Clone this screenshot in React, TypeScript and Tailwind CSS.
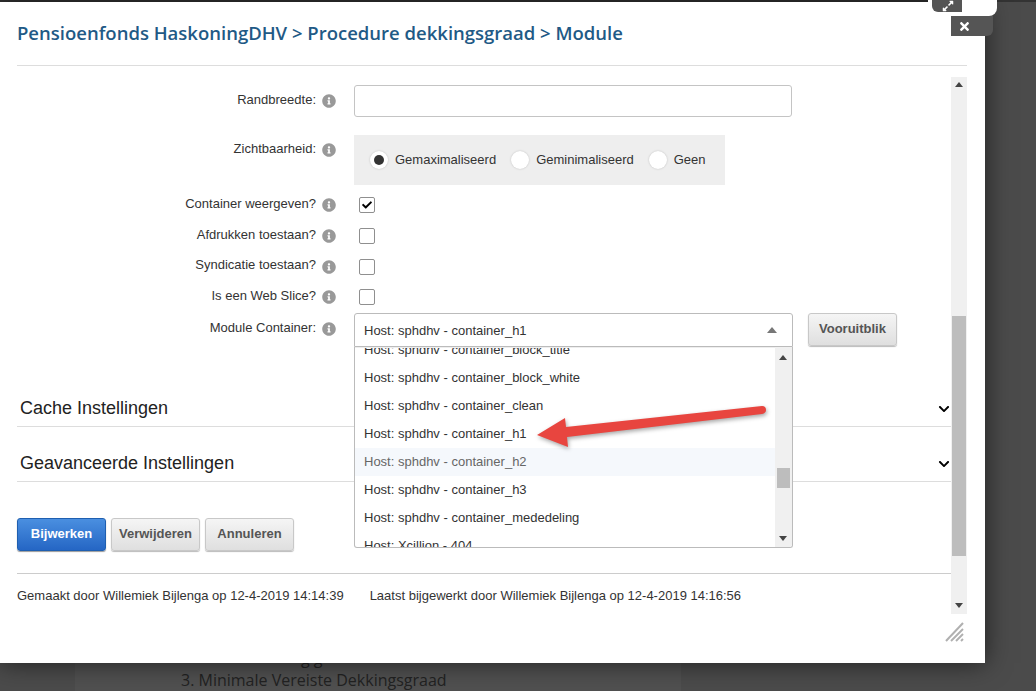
import { FaCheck, FaChevronDown, FaExpandAlt, FaInfoCircle, FaTimes } from "react-icons/fa";

const options = [
  "Host: sphdhv - container_block_title",
  "Host: sphdhv - container_block_white",
  "Host: sphdhv - container_clean",
  "Host: sphdhv - container_h1",
  "Host: sphdhv - container_h2",
  "Host: sphdhv - container_h3",
  "Host: sphdhv - container_mededeling",
  "Host: Xcillion - 404",
];

const Label = ({ text }: { text: string }) => (
  <div className="flex w-[319px] shrink-0 items-center justify-end gap-[6px]">
    <span className="pb-[3px]">{text}</span>
    <FaInfoCircle className="h-[14px] w-[14px] text-[#999]" />
  </div>
);

const Check = ({ label, checked }: { label: string; checked?: boolean }) => (
  <div className="flex h-[30.7px] items-center">
    <Label text={label} />
    <div className="ml-[23px] flex h-[16px] w-[16px] items-center justify-center rounded-[2px] border border-[#8f8f8f] bg-white">
      {checked && <FaCheck className="h-[10px] w-[10px] text-black" />}
    </div>
  </div>
);

const Radio = ({ label, on }: { label: string; on?: boolean }) => (
  <div className="flex items-center gap-[7px]">
    <div className="flex h-[18px] w-[18px] items-center justify-center rounded-full bg-white shadow-[0_0_2px_#bbb]">
      {on && <div className="h-[10px] w-[10px] rounded-full bg-[#333]" />}
    </div>
    <span>{label}</span>
  </div>
);

const Section = ({ title }: { title: string }) => (
  <div className="flex h-[55px] items-center justify-between border-b border-[#ddd] pt-[20px] pr-[1px] pl-[3px]">
    <span className="text-[18px] text-[#222]">{title}</span>
    <FaChevronDown className="h-[12px] w-[12px] text-black" />
  </div>
);

const GreyButton = ({ children, w }: { children: string; w: string }) => (
  <button
    className={`h-[33px] rounded-[3px] border border-[#c8c8c8] bg-gradient-to-b from-[#f5f5f5] to-[#dfdfdf] pb-[2px] text-[13px] font-bold text-[#555] shadow-[0_1px_1px_#bbb] ${w}`}
  >
    {children}
  </button>
);

export default function App() {
  return (
    <div className="relative h-[691px] w-[1036px] overflow-hidden bg-[#4b4b4b] font-['Liberation_Sans',sans-serif] text-[13px] text-[#333]">
      <div className="h-[2px] bg-[#333]" />
      <div className="relative z-10 h-[661px] w-[985px] bg-white pr-[18px] pl-[17px] shadow-[0_0_24px_rgba(0,0,0,0.6)]">
        <h1 className="flex h-[64px] items-center border-b border-[#ddd] pb-[2px] font-['Open_Sans',sans-serif] text-[18.5px] font-semibold text-[#1f5a86]">
          Pensioenfonds HaskoningDHV &gt; Procedure dekkingsgraad &gt; Module
        </h1>

        <div className="mt-[11px] flex h-[537px]">
          <div className="w-[934px] shrink-0 pt-[8px]">
            <div className="flex items-start">
              <div className="pt-[5px]">
                <Label text="Randbreedte:" />
              </div>
              <input className="ml-[18px] h-[32px] w-[438px] rounded-[3px] border border-[#c4c4c4]" />
            </div>

            <div className="mt-[18px] flex items-start">
              <div className="pt-[4px]">
                <Label text="Zichtbaarheid:" />
              </div>
              <div className="ml-[18px] flex h-[50px] w-[371px] items-center gap-[15px] bg-[#eee] pl-[16px]">
                <Radio label="Gemaximaliseerd" on />
                <Radio label="Geminimaliseerd" />
                <Radio label="Geen" />
              </div>
            </div>

            <div className="mt-[5px]">
              <Check label="Container weergeven?" checked />
              <Check label="Afdrukken toestaan?" />
              <Check label="Syndicatie toestaan?" />
              <Check label="Is een Web Slice?" />
            </div>

            <div className="relative flex items-start">
              <div className="pt-[5px]">
                <Label text="Module Container:" />
              </div>
              <div className="ml-[18px] flex h-[34px] w-[439px] items-center justify-between rounded-t-[3px] border border-[#bbb] bg-white pt-[1px] pr-[15px] pl-[9px]">
                <span>Host: sphdhv - container_h1</span>
                <div className="h-0 w-0 border-x-[5px] border-b-[6px] border-x-transparent border-b-[#777]" />
              </div>
              <button className="ml-[15px] h-[33px] w-[89px] rounded-[3px] border border-[#c8c8c8] bg-gradient-to-b from-[#f5f5f5] to-[#dfdfdf] pb-[2px] text-[13px] font-bold text-[#555] shadow-[0_1px_1px_#bbb]">
                Vooruitblik
              </button>

              {/* open dropdown sits over the sections below */}
              <div className="absolute top-[34px] left-[337px] z-20 flex h-[201px] w-[439px] overflow-hidden rounded-b-[3px] border border-t-0 border-[#bbb] bg-white">
                <div className="flex-1 overflow-hidden border-t border-[#eee]">
                  <div className="-mt-[12px]">
                    {options.map((o) => (
                      <div
                        key={o}
                        className={`flex h-[28px] items-center pl-[9px] ${
                          o.endsWith("h2") ? "bg-[#f5f8fc] text-[#666]" : ""
                        }`}
                      >
                        {o}
                      </div>
                    ))}
                  </div>
                </div>
                <div className="relative w-[17px] bg-[#f0f0f0]">
                  <div className="absolute top-[8px] left-[4px] h-0 w-0 border-x-[4px] border-b-[5px] border-x-transparent border-b-[#444]" />
                  <div className="absolute top-[121px] left-[2px] h-[20px] w-[13px] bg-[#bdbdbd]" />
                  <div className="absolute bottom-[6px] left-[4px] h-0 w-0 border-x-[4px] border-t-[5px] border-x-transparent border-t-[#444]" />
                </div>
              </div>
            </div>

            <div className="mt-[25px]">
              <Section title="Cache Instellingen" />
              <Section title="Geavanceerde Instellingen" />
            </div>

            <div className="mt-[36px] flex gap-[5px]">
              <button className="h-[33px] w-[89px] rounded-[3px] border border-[#1f5fb0] bg-gradient-to-b from-[#4a8fe0] to-[#2566c4] pb-[2px] text-[13px] font-bold text-white shadow-[0_1px_1px_#999]">
                Bijwerken
              </button>
              <GreyButton w="w-[89px]">Verwijderen</GreyButton>
              <GreyButton w="w-[89px]">Annuleren</GreyButton>
            </div>

            <div className="mt-[22px] flex h-[44px] items-center gap-[26px] border-t border-[#ccc]">
              <span>Gemaakt door Willemiek Bijlenga op 12-4-2019 14:14:39</span>
              <span>Laatst bijgewerkt door Willemiek Bijlenga op 12-4-2019 14:16:56</span>
            </div>
          </div>

          <div className="relative w-[16px] bg-[#f0f0f0]">
            <div className="absolute top-[5px] left-[4px] h-0 w-0 border-x-[4px] border-b-[5px] border-x-transparent border-b-[#444]" />
            <div className="absolute top-[239px] left-[1px] h-[240px] w-[14px] bg-[#bdbdbd]" />
            <div className="absolute bottom-[6px] left-[4px] h-0 w-0 border-x-[4px] border-t-[5px] border-x-transparent border-t-[#444]" />
          </div>
        </div>

        {/* resize grip */}
        <svg className="absolute top-[620px] left-[945px]" width="20" height="20" viewBox="0 0 20 20">
          <g stroke="#b0b0b0" strokeWidth="2">
            <path d="M1 19 L18 1" />
            <path d="M6 19 L18 7" />
            <path d="M11 19 L18 12" />
            <path d="M16 19 L18 17" />
          </g>
        </svg>
      </div>

      {/* bit of the page behind the modal */}
      <div className="relative mx-[75px] flex h-[28px] w-[606px] items-center bg-[#505050] pt-[6px] pl-[106px] font-['Open_Sans',sans-serif] text-[16px] text-[#222]">
        <span className="absolute -top-[17px] left-[226px]">g g</span>
        3. Minimale Vereiste Dekkingsgraad
      </div>

      {/* modal window buttons */}
      <div className="absolute top-0 left-[928px] z-20 h-[16px] w-[69px] rounded-b-[8px] bg-white">
        <div className="ml-[4px] flex h-[12px] w-[30px] items-center justify-center rounded-bl-[6px] bg-[#555] pl-[2px]">
          <FaExpandAlt className="h-[12px] w-[12px] text-white" />
        </div>
      </div>
      <div className="absolute top-[16px] left-[951px] z-20 flex h-[20px] w-[42px] items-center rounded-br-[6px] bg-[#555] pl-[7px]">
        <FaTimes className="h-[13px] w-[13px] text-white" />
      </div>

      {/* red annotation arrow */}
      <svg className="absolute top-0 left-0 z-30" width="1036" height="691" viewBox="0 0 1036 691">
        <path d="M537 435 L565 418 L566 427 L762 406 Q766 406 766 410 Q766 413 762 414 L567 437 L568 447 Z" fill="#e8453f" style={{ filter: "drop-shadow(1px 2px 2px rgba(0,0,0,0.35))" }} />
      </svg>
    </div>
  );
}
